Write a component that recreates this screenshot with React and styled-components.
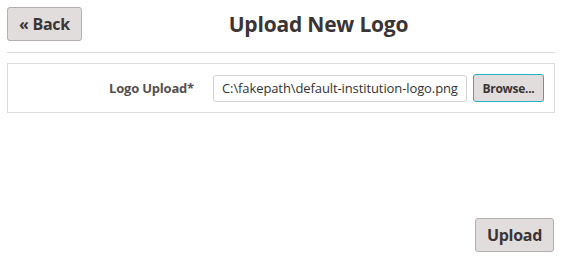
import React from "react";
import styled, { createGlobalStyle } from "styled-components";

const GlobalStyle = createGlobalStyle`
  body {
    margin: 0;
    background: #ffffff;
    font-family: "Open Sans", "Noto Sans", sans-serif;
    color: #3b3434;
  }
`;

const Page = styled.div`
  padding: 7px;
  width: 548px;
`;

const Header = styled.div`
  display: flex;
  align-items: center;
  height: 34px;
`;

const Button = styled.button`
  box-sizing: border-box;
  width: ${(p) => p.$w}px;
  height: ${(p) => p.$h || 34}px;
  padding: 0;
  background: #e1dddd;
  border: 1px solid ${(p) => (p.$focus ? "#25b0c6" : "#b5afaf")};
  border-radius: 3px;
  font-family: inherit;
  font-weight: 700;
  font-size: ${(p) => p.$size || 16}px;
  color: #3b3434;
  letter-spacing: -0.3px;
  white-space: nowrap;
  cursor: pointer;
`;

const Title = styled.h1`
  flex: 1;
  margin: 0;
  text-align: center;
  font-size: 21px;
  font-weight: 700;
  color: #3b3434;
  letter-spacing: -0.2px;
`;

const Rule = styled.hr`
  margin: 11px 0 0;
  border: 0;
  border-top: 1px solid #dcdcdc;
`;

const Panel = styled.div`
  margin-top: 10px;
  border: 1px solid #dcdcdc;
  padding: 10px;
  height: 28px;
`;

const Row = styled.div`
  display: flex;
  align-items: center;
  gap: 6px;
`;

const Label = styled.label`
  flex: 1;
  margin-right: 13px;
  text-align: right;
  font-size: 13px;
  font-weight: 700;
  color: #575050;
  letter-spacing: -0.2px;
`;

const FileInput = styled.div`
  box-sizing: border-box;
  width: 254px;
  height: 27px;
  padding: 0 8px;
  display: flex;
  align-items: center;
  border: 1px solid #d2d2d2;
  border-radius: 3px;
  font-size: 13px;
  color: #333;
  letter-spacing: -0.1px;
  white-space: nowrap;
  overflow: hidden;
`;

const Footer = styled.div`
  display: flex;
  justify-content: flex-end;
  margin-top: 105px;
  padding-right: 1px;
`;

export default function App() {
  return (
    <>
      <GlobalStyle />
      <Page>
        <Header>
          <Button $w={75}>« Back</Button>
          <Title>Upload New Logo</Title>
        </Header>
        <Rule />
        <Panel>
          <Row>
            <Label>Logo Upload*</Label>
            <FileInput>C:\fakepath\default-institution-logo.png</FileInput>
            <Button $focus $size={12} $w={71} $h={28}>
              Browse...
            </Button>
          </Row>
        </Panel>
        <Footer>
          <Button $w={79}>Upload</Button>
        </Footer>
      </Page>
    </>
  );
}
